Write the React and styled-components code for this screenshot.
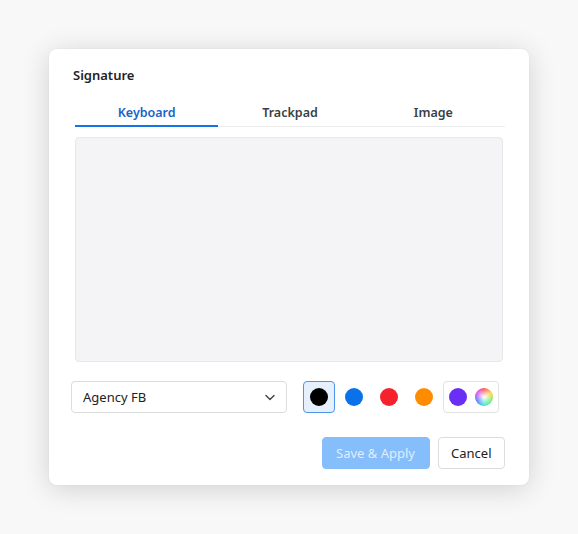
import React, { useState } from "react";
import styled, { createGlobalStyle } from "styled-components";

const GlobalStyle = createGlobalStyle`
  html, body {
    margin: 0;
    padding: 0;
    background: #f8f8f8;
    font-family: "Noto Sans", "Open Sans", sans-serif;
  }
`;

const Page = styled.div`
  width: 578px;
  height: 534px;
  padding: 49px 0 0 49px;
  box-sizing: border-box;
`;

const Dialog = styled.div`
  width: 480px;
  height: 436px;
  box-sizing: border-box;
  background: #fff;
  border-radius: 8px;
  padding: 16px 24px;
  display: flex;
  flex-direction: column;
  box-shadow: 0 4px 28px rgba(0, 0, 0, 0.16), 0 0 2px rgba(0, 0, 0, 0.06);
`;

const Title = styled.h2`
  margin: 0;
  font-size: 13px;
  line-height: 20px;
  font-weight: 600;
  color: #1f2329;
`;

const TabBar = styled.div`
  margin: 10px 0 0 2px;
  display: flex;
  border-bottom: 1px solid #ededed;
  height: 31px;
`;

const Tab = styled.button`
  flex: 1;
  border: none;
  background: none;
  padding: 4px 0 0 0;
  font-family: inherit;
  font-size: 12.5px;
  font-weight: 600;
  color: ${(p) => (p.$active ? "#1864c8" : "#3a3f45")};
  border-bottom: 2px solid ${(p) => (p.$active ? "#1473e6" : "transparent")};
  margin-bottom: -1px;
  cursor: pointer;
`;

const Canvas = styled.div`
  margin: 10px 2px 0 2px;
  height: 225px;
  box-sizing: border-box;
  background: #f4f4f6;
  border: 1px solid #e8e8ea;
  border-radius: 4px;
`;

const Controls = styled.div`
  margin: 19px 0 0 -2px;
  display: flex;
  align-items: center;
  gap: 16px;
`;

const Select = styled.div`
  width: 216px;
  height: 32px;
  box-sizing: border-box;
  border: 1px solid #dcdcdc;
  border-radius: 4px;
  display: flex;
  align-items: center;
  justify-content: space-between;
  padding: 0 10px 0 11px;
  font-size: 13px;
  color: #222;
`;

const Swatches = styled.div`
  display: flex;
  align-items: center;
  gap: 3px;
`;

const Swatch = styled.button`
  width: 32px;
  height: 32px;
  box-sizing: border-box;
  padding: 0;
  display: flex;
  align-items: center;
  justify-content: center;
  border-radius: 4px;
  border: 1px solid ${(p) => (p.$selected ? "#4c94ec" : "transparent")};
  background: ${(p) => (p.$selected ? "#e6f0fd" : "transparent")};
  cursor: pointer;
`;

const Dot = styled.span`
  width: 18px;
  height: 18px;
  border-radius: 50%;
  background: ${(p) => p.$color};
`;

const Group = styled.div`
  width: 56px;
  height: 32px;
  box-sizing: border-box;
  border: 1px solid #e2e2e2;
  border-radius: 4px;
  display: flex;
  align-items: center;
  justify-content: space-between;
  padding: 0 5px;
`;

const Wheel = styled.span`
  width: 18px;
  height: 18px;
  border-radius: 50%;
  background: radial-gradient(circle, #fff 0%, rgba(255, 255, 255, 0) 70%),
    conic-gradient(#ff4d4d, #ffd23f, #6cf06c, #3fe0e0, #4f7dff, #d24fff, #ff4d4d);
`;

const Footer = styled.div`
  margin-top: 24px;
  display: flex;
  justify-content: flex-end;
  gap: 8px;
`;

const Button = styled.button`
  height: 32px;
  box-sizing: border-box;
  padding: 0 ${(p) => (p.$primary ? "13.5px" : "12.5px")};
  border-radius: 4px;
  font-family: inherit;
  font-size: 13px;
  border: 1px solid ${(p) => (p.$primary ? "#86bdfb" : "#dcdcdc")};
  background: ${(p) => (p.$primary ? "#86bdfb" : "#fff")};
  color: ${(p) => (p.$primary ? "rgba(255,255,255,0.75)" : "#222")};
  cursor: pointer;
`;

const tabs = ["Keyboard", "Trackpad", "Image"];
const colors = ["#000000", "#0a72e8", "#f5222d", "#ff8c00"];

const App = () => {
  const [tab, setTab] = useState(0);
  const [color, setColor] = useState(0);

  return (
    <React.Fragment>
      <GlobalStyle />
      <Page>
        <Dialog>
          <Title>Signature</Title>
          <TabBar>
            {tabs.map((t, i) => (
              <Tab key={t} $active={tab === i} onClick={() => setTab(i)}>
                {t}
              </Tab>
            ))}
          </TabBar>
          <Canvas />
          <Controls>
            <Select>
              Agency FB
              <svg width="12" height="12" viewBox="0 0 12 12" fill="none">
                <path
                  d="M2 4.5 6 8.5 10 4.5"
                  stroke="#444"
                  strokeWidth="1.4"
                  strokeLinecap="round"
                  strokeLinejoin="round"
                />
              </svg>
            </Select>
            <Swatches>
              {colors.map((c, i) => (
                <Swatch key={c} $selected={color === i} onClick={() => setColor(i)}>
                  <Dot $color={c} />
                </Swatch>
              ))}
              <Group>
                <Dot $color="#6a2ff4" />
                <Wheel />
              </Group>
            </Swatches>
          </Controls>
          <Footer>
            <Button $primary>Save &amp; Apply</Button>
            <Button>Cancel</Button>
          </Footer>
        </Dialog>
      </Page>
    </React.Fragment>
  );
};

export default App;
